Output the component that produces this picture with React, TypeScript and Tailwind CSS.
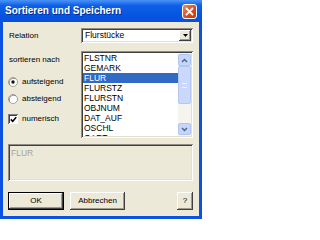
import React from "react";

const fields = ["FLSTNR", "GEMARK", "FLUR", "FLURSTZ", "FLURSTN", "OBJNUM", "DAT_AUF", "OSCHL", "OART"];

// classic win32 3D edges
const raised =
  "bg-[#ECE9D8] shadow-[inset_-1px_-1px_0_#404040,inset_1px_1px_0_#ffffff,inset_-2px_-2px_0_#9d9a8f]";
const sunken =
  "shadow-[inset_1px_1px_0_#8f8d86,inset_-1px_-1px_0_#ffffff,inset_2px_2px_0_#3f3f3f,inset_-2px_-2px_0_#e2dfd2]";

function Radio({ checked }: { checked?: boolean }) {
  return (
    <svg width="10" height="10" viewBox="0 0 10 10">
      <circle cx="5" cy="5" r="4.5" fill="#ffffff" stroke="#a3a19a" strokeWidth="1" />
      <path d="M1.8 7.8 A4.4 4.4 0 0 1 7.8 1.8" fill="none" stroke="#7a7a76" strokeWidth="0.8" />
      {checked && <circle cx="5" cy="5" r="1.7" fill="#111111" />}
    </svg>
  );
}

function Chevron({ up }: { up?: boolean }) {
  return (
    <svg width="7" height="5" viewBox="0 0 7 5">
      <path d={up ? "M1 4 L3.5 1.5 L6 4" : "M1 1 L3.5 3.5 L6 1"} fill="none" stroke="#4d6185" strokeWidth="1.4" />
    </svg>
  );
}

export default function App() {
  return (
    <div className="w-[202px] h-[219px] flex flex-col bg-[#0b52e3] font-['Liberation_Sans',Arial,sans-serif] overflow-hidden">
      {/* Title bar */}
      <div className="h-[22px] shrink-0 flex items-center justify-between pl-[5px] pr-[5px] bg-[linear-gradient(to_bottom,#4a93f7,#0f5fe8_25%,#0555e2_70%,#0a50d8)]">
        <span className="text-white font-bold text-[10px] leading-none [text-shadow:1px_1px_0_#0a2a8a]">
          Sortieren und Speichern
        </span>
        <div className="w-[15px] h-[15px] rounded-[3px] border border-white bg-[linear-gradient(135deg,#ef8a6a,#d9471f_60%,#c03c16)] flex items-center justify-center">
          <svg width="9" height="9" viewBox="0 0 9 9">
            <path d="M1.5 1.5 L7.5 7.5 M7.5 1.5 L1.5 7.5" stroke="#ffffff" strokeWidth="1.8" strokeLinecap="round" />
          </svg>
        </div>
      </div>

      {/* Body */}
      <div className="flex-1 mx-[3px] mb-[3px] bg-[#ECE9D8] flex flex-col pl-[5px] pr-[6px] text-[8px] text-black">
        {/* Relation row */}
        <div className="mt-[6px] h-[15px] flex items-center">
          <span className="w-[73px] pl-[1px]">Relation</span>
          <div className={`flex-1 h-full bg-white flex items-center p-[2px] ${sunken}`}>
            <span className="flex-1 pl-[2px] text-[8.5px]">Flurstücke</span>
            <div className={`w-[12px] h-full flex items-center justify-center ${raised}`}>
              <svg width="5" height="3" viewBox="0 0 5 3">
                <path d="M0 0 H5 L2.5 3 Z" fill="#000000" />
              </svg>
            </div>
          </div>
        </div>

        {/* Sort row */}
        <div className="mt-[8px] h-[87px] flex">
          <div className="w-[73px] flex flex-col">
            <span className="mt-[4px] h-[10px] leading-[10px] pl-[1px]">sortieren nach</span>
            <div className="mt-[11px] h-[12px] flex items-center gap-[4px]">
              <Radio checked />
              <span>aufsteigend</span>
            </div>
            <div className="mt-[5px] h-[12px] flex items-center gap-[4px]">
              <Radio />
              <span>absteigend</span>
            </div>
            <div className="mt-[8px] h-[12px] flex items-center gap-[4px]">
              <div className="w-[10px] h-[10px] bg-white shadow-[inset_1px_1px_0_#808080,inset_-1px_-1px_0_#ffffff,inset_2px_2px_0_#404040] flex items-center justify-center">
                <svg width="7" height="7" viewBox="0 0 7 7">
                  <path d="M0.8 3.4 L2.7 5.3 L6.2 1.2" fill="none" stroke="#000000" strokeWidth="1.5" />
                </svg>
              </div>
              <span>numerisch</span>
            </div>
          </div>

          <div className={`flex-1 bg-white p-[2px] flex ${sunken}`}>
            <div className="flex-1 overflow-hidden flex flex-col text-[8.5px]">
              {fields.map((f) => (
                <div
                  key={f}
                  className={`h-[10px] shrink-0 leading-[10px] pl-[1px] ${f === "FLUR" ? "bg-[#316AC5] text-white" : ""}`}
                >
                  {f}
                </div>
              ))}
            </div>
            {/* XP scrollbar */}
            <div className="w-[13px] flex flex-col bg-[#f5f4ee]">
              <div className="h-[12px] mt-[1px] rounded-[2px] bg-[#c5d6fb] border border-[#b0c4f4] flex items-center justify-center">
                <Chevron up />
              </div>
              <div className="h-[38px] rounded-[2px] bg-[#c9d8fb] border border-[#b3c6f4] flex items-center justify-center">
                <div className="w-[5px] h-[5px] border-y border-[#eef3fe]" />
              </div>
              <div className="flex-1" />
              <div className="h-[12px] mb-[1px] rounded-[2px] bg-[#c5d6fb] border border-[#b0c4f4] flex items-center justify-center">
                <Chevron />
              </div>
            </div>
          </div>
        </div>

        {/* Preview box */}
        <div className={`mt-[6px] h-[37px] px-[3px] py-[3px] text-[8.5px] text-[#a7a59b] ${sunken}`}>FLUR</div>

        {/* Buttons */}
        <div className="mt-[11px] h-[18px] flex">
          <div className="w-[56px] h-full border border-black">
            <div className={`w-full h-full flex items-center justify-center ${raised}`}>OK</div>
          </div>
          <div className={`ml-[6px] w-[55px] h-full flex items-center justify-center ${raised}`}>Abbrechen</div>
          <div className="flex-1" />
          <div className={`w-[16px] h-full flex items-center justify-center ${raised}`}>?</div>
        </div>
      </div>
    </div>
  );
}
